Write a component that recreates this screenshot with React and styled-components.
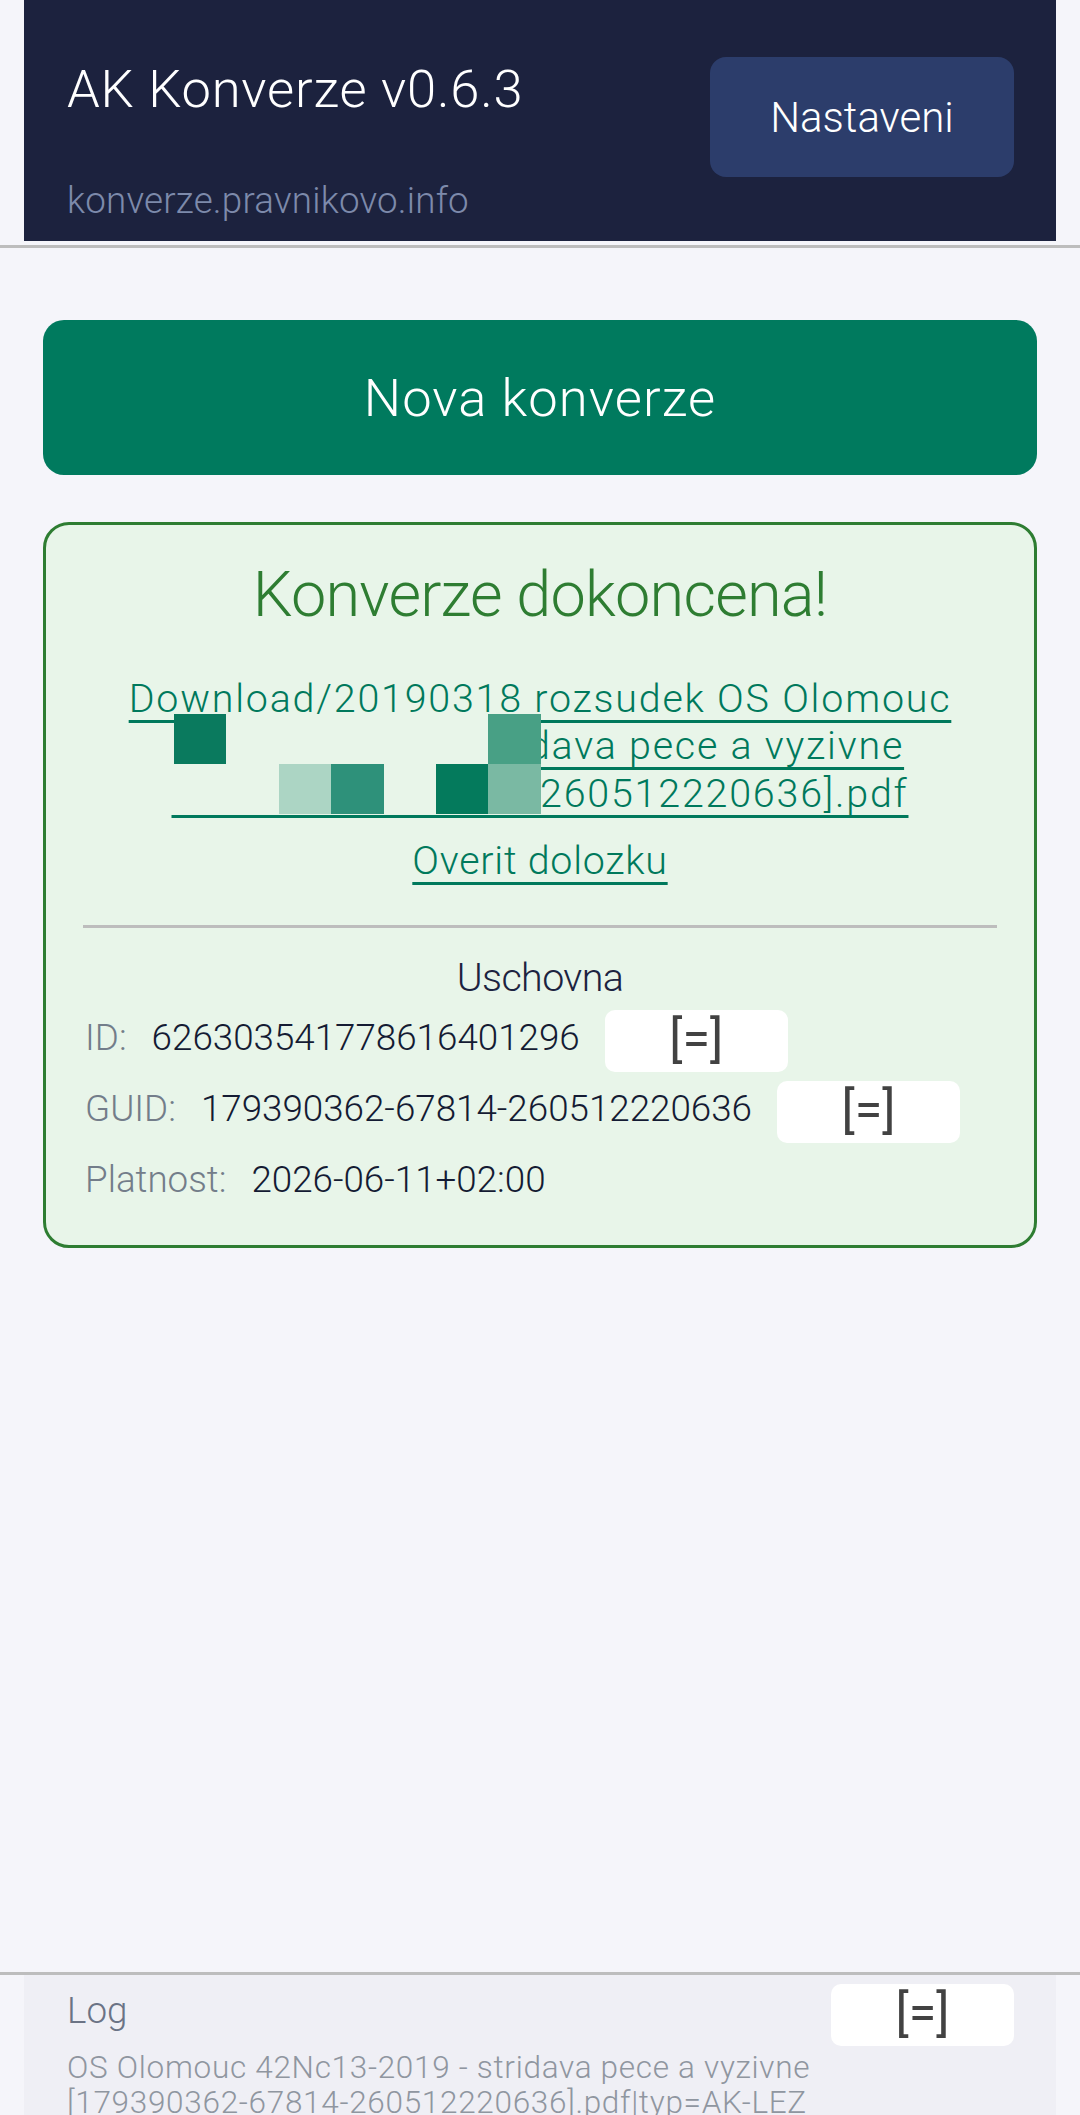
import React from 'react';
import styled, { createGlobalStyle } from 'styled-components';

const GlobalStyles = createGlobalStyle`
  html, body {
    margin: 0;
    padding: 0;
    background: #f5f5fa;
  }
  body {
    font-family: 'Roboto', 'Open Sans', sans-serif;
    font-weight: 300;
  }
  * {
    box-sizing: border-box;
  }
`;

const AppContainer = styled.div`
  width: 100%;
  height: 100vh;
  display: flex;
  flex-direction: column;
  overflow: hidden;
`;

const TopBar = styled.div`
  padding: 0 24px 4px;
  border-bottom: 3px solid #bdbdbd;
`;

const Header = styled.header`
  background: #1c223e;
  display: flex;
  justify-content: space-between;
  align-items: flex-start;
  padding: 57px 42px 18px 43px;
`;

const Brand = styled.div`
  display: flex;
  flex-direction: column;
`;

const Title = styled.h1`
  margin: 1px 0 0;
  font-size: 52.5px;
  line-height: 63px;
  font-weight: 300;
  color: #ffffff;
  letter-spacing: 0.8px;
`;

const Subtitle = styled.div`
  margin-top: 58px;
  font-size: 36.75px;
  line-height: 44px;
  color: #7d8aab;
  letter-spacing: 0.2px;
`;

const SettingsButton = styled.button`
  width: 304px;
  height: 120px;
  border: none;
  border-radius: 16px;
  background: #2c3d6b;
  color: #ffffff;
  font-family: inherit;
  font-weight: 300;
  font-size: 42px;
  cursor: pointer;
`;

const Main = styled.main`
  flex: 1;
  padding: 72px 43px 0;
  display: flex;
  flex-direction: column;
  gap: 47px;
`;

const NewButton = styled.button`
  width: 100%;
  height: 155px;
  border: none;
  border-radius: 21px;
  background: #007a5e;
  color: #ffffff;
  font-family: inherit;
  font-weight: 300;
  font-size: 52.5px;
  letter-spacing: 1.1px;
  cursor: pointer;
`;

const ResultCard = styled.section`
  position: relative;
  border: 3px solid #2e7d32;
  border-radius: 26px;
  background: #e8f5e9;
  padding: 32px 37px 31px;
  display: flex;
  flex-direction: column;
  align-items: stretch;
`;

const ResultTitle = styled.h2`
  margin: 0;
  text-align: center;
  font-size: 63px;
  line-height: 75px;
  font-weight: 300;
  color: #2e7d32;
  letter-spacing: -0.8px;
`;

const LinkBlock = styled.div`
  margin-top: 43px;
  text-align: center;
  font-size: 39.4px;
  line-height: 47.25px;
`;

const FileLink = styled.a`
  color: #00795c;
  text-decoration: underline;
  text-decoration-thickness: 3px;
  text-decoration-skip-ink: none;
  text-underline-offset: 8px;
  letter-spacing: ${p => (p.$short ? '0.75px' : '1.8px')};
`;

const VerifyBlock = styled(LinkBlock)`
  margin-top: 20px;
`;

/* blocky overlay painted over part of the file name */
const Mosaic = styled.div`
  position: absolute;
  left: 128px;
  top: 189px;
  display: grid;
  grid-template-columns: repeat(7, 52.4px);
  grid-auto-rows: 50px;
  pointer-events: none;
`;

const MosaicCell = styled.div`
  background: ${p => p.$c};
`;

const Divider = styled.hr`
  margin: 41px 0 0;
  border: none;
  height: 3px;
  background: #bdbdbd;
`;

const SectionTitle = styled.div`
  margin-top: 26px;
  text-align: center;
  font-size: 39.4px;
  line-height: 47.25px;
  font-weight: 300;
  color: #1c2340;
  letter-spacing: -0.6px;
`;

const InfoList = styled.div`
  margin-top: 9px;
  display: flex;
  flex-direction: column;
  gap: 9px;
`;

const InfoRow = styled.div`
  display: flex;
  align-items: center;
  gap: 25px;
  height: 62px;
  padding-left: 2px;
`;

const InfoLabel = styled.span`
  font-size: 36.75px;
  line-height: 44px;
  color: #737d8a;
  padding-bottom: 6px;
`;

const InfoValue = styled.span`
  font-size: 36.75px;
  line-height: 44px;
  color: #141b33;
  padding-bottom: 6px;
`;

const CopyButton = styled.button`
  width: 183px;
  height: 62px;
  border: none;
  border-radius: 10px;
  background: #ffffff;
  color: #424242;
  font-family: inherit;
  font-weight: 400;
  font-size: 50px;
  line-height: 1;
  padding: 0 0 4px;
  cursor: pointer;
`;

const Footer = styled.footer`
  height: 143px;
  border-top: 3px solid #bdbdbd;
  padding: 0 24px;
`;

const LogPanel = styled.div`
  height: 100%;
  background: #efeff5;
  padding: 9px 42px 0 43px;
  overflow: hidden;
`;

const LogHeader = styled.div`
  display: flex;
  justify-content: space-between;
  align-items: center;
  height: 62px;
`;

const LogTitle = styled.span`
  font-size: 36.75px;
  line-height: 44px;
  color: #6b7385;
  padding-bottom: 8px;
`;

const LogText = styled.div`
  margin-top: 4px;
  font-size: 31.5px;
  line-height: 35px;
  color: #8f96a0;
  letter-spacing: 0.7px;
  white-space: nowrap;
`;

const fileLines = [
  'Download/20190318 rozsudek OS Olomouc',
  '42Nc13-2019 - stridava pece a vyzivne',
  '[179390362-67814-260512220636].pdf',
];

const bg = '#e8f5e9';
const mosaic = [
  '#0a7a5e', bg, bg, bg, bg, bg, '#48a085',
  bg, bg, '#acd5c4', '#2e917a', bg, '#047a5c', '#7ab9a3',
];

const info = [
  { label: 'ID:', value: '626303541778616401296', copy: true },
  { label: 'GUID:', value: '179390362-67814-260512220636', copy: true },
  { label: 'Platnost:', value: '2026-06-11+02:00', copy: false },
];

export default function App() {
  return (
    <>
      <GlobalStyles />
      <AppContainer>
        <TopBar>
          <Header>
            <Brand>
              <Title>AK Konverze v0.6.3</Title>
              <Subtitle>konverze.pravnikovo.info</Subtitle>
            </Brand>
            <SettingsButton>Nastaveni</SettingsButton>
          </Header>
        </TopBar>

        <Main>
          <NewButton>Nova konverze</NewButton>
          <ResultCard>
            <ResultTitle>Konverze dokoncena!</ResultTitle>
            <LinkBlock>
              <FileLink href="#">
                {fileLines.map((line, i) => (
                  <React.Fragment key={i}>
                    {line}
                    {i < fileLines.length - 1 && <br />}
                  </React.Fragment>
                ))}
              </FileLink>
            </LinkBlock>
            <VerifyBlock>
              <FileLink href="#" $short>Overit dolozku</FileLink>
            </VerifyBlock>
            <Mosaic>
              {mosaic.map((c, i) => (
                <MosaicCell key={i} $c={c} />
              ))}
            </Mosaic>
            <Divider />
            <SectionTitle>Uschovna</SectionTitle>
            <InfoList>
              {info.map(row => (
                <InfoRow key={row.label}>
                  <InfoLabel>{row.label}</InfoLabel>
                  <InfoValue>{row.value}</InfoValue>
                  {row.copy && <CopyButton>[=]</CopyButton>}
                </InfoRow>
              ))}
            </InfoList>
          </ResultCard>
        </Main>

        <Footer>
          <LogPanel>
            <LogHeader>
              <LogTitle>Log</LogTitle>
              <CopyButton>[=]</CopyButton>
            </LogHeader>
            <LogText>
              OS Olomouc 42Nc13-2019 - stridava pece a vyzivne
              <br />
              [179390362-67814-260512220636].pdf|typ=AK-LEZ
            </LogText>
          </LogPanel>
        </Footer>
      </AppContainer>
    </>
  );
}
